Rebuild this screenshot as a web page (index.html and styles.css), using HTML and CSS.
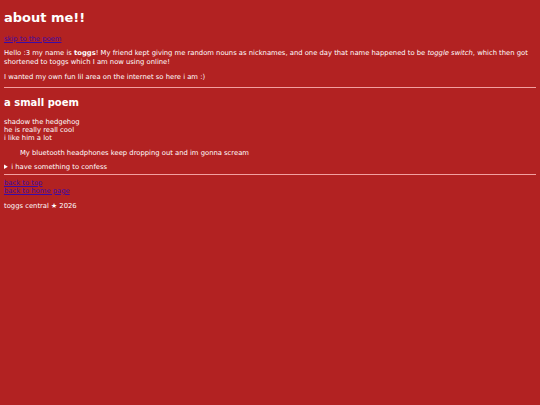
FILE: index.html
```html
<!DOCTYPE html>
<html lang="en">
<head>
<meta charset="utf-8">
<title>about me!!</title>
<link rel="stylesheet" href="styles.css">
</head>
<body id="top">
<main class="page">
  <h1 class="title">about me!!</h1>
  <p class="skip"><a href="#poem">skip to the poem</a></p>
  <p class="intro">Hello :3 my name is <strong>toggs</strong>! My friend kept giving me random nouns as nicknames, and one day that name happened to be <em>toggle switch</em>, which then got shortened to toggs which I am now using online!</p>
  <p class="intro-end">I wanted my own fun lil area on the internet so here i am :)</p>
  <hr class="rule">
  <h2 class="subtitle" id="poem">a small poem</h2>
  <p class="poem">shadow the hedgehog<br>he is really reall cool<br>i like him a lot</p>
  <blockquote class="quote">My bluetooth headphones keep dropping out and im gonna scream</blockquote>
  <details class="confess">
    <summary>i have something to confess</summary>
    <p>i have never played a sonic game</p>
  </details>
  <hr class="rule rule-end">
  <nav class="links">
    <a href="#top">back to top</a><br>
    <a href="#">back to home page</a>
  </nav>
  <footer class="foot">toggs central ★ 2026</footer>
</main>
</body>
</html>
```

FILE: styles.css
```css
html, body {
  margin: 0;
  background: #b22222;
}

body {
  color: #ffffff;
  font-family: "DejaVu Sans", Verdana, sans-serif;
  font-size: 6.8px;
  line-height: 9px;
}

.page {
  padding: 4px 4px;
}

.title {
  font-size: 13px;
  font-weight: bold;
  margin: 6px 0 9px;
  line-height: 1.2;
}

.subtitle {
  font-size: 10px;
  font-weight: bold;
  margin: 9px 0 9px;
  line-height: 1.2;
}

p {
  margin: 6px 0;
}

.skip {
  margin-bottom: 5px;
}

.intro {
  margin-top: 5px;
}

.intro-end {
  margin-bottom: 5px;
}

.poem {
  line-height: 8px;
}

a {
  color: #3a0ca8;
}

.rule {
  border: 0;
  border-top: 1px solid #f2a0a0;
  margin: 4px 0;
}

.rule-end {
  margin-top: 2px;
}

.quote {
  margin: 7px 16px 5px;
}

.confess summary {
  cursor: pointer;
}

.links {
  margin: 4px 0;
  line-height: 8px;
}

.foot {
  margin: 7px 0 6px;
}
```
